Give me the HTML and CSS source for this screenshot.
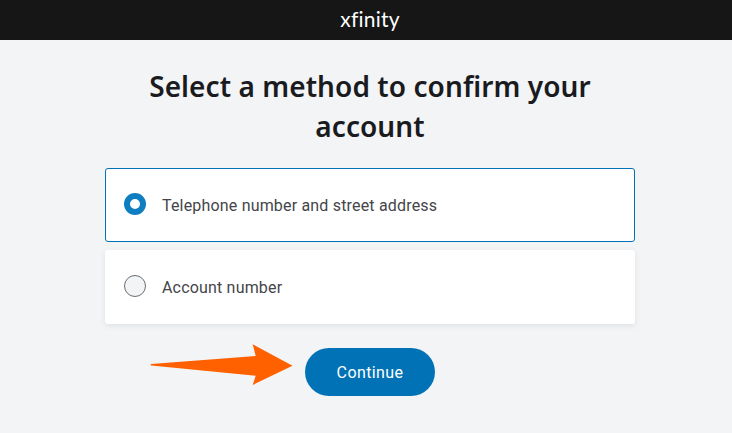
FILE: index.html
```html
<!DOCTYPE html>
<html lang="en">
<head>
<meta charset="utf-8">
<title>Select a method</title>
<link rel="stylesheet" href="styles.css">
</head>
<body>
<header class="topbar"><span class="logo">xfinity</span></header>
<main class="content">
  <h1 class="title">Select a method to confirm your account</h1>
  <div class="options">
    <label class="option option-selected"><span class="radio radio-on"></span><span class="option-text">Telephone number and street address</span></label>
    <label class="option"><span class="radio"></span><span class="option-text">Account number</span></label>
  </div>
  <div class="actions">
    <svg class="arrow" width="144" height="42" viewBox="0 0 144 42"><path d="M1.2 20 L105.7 12 L102.7 0.3 L142.5 21.7 L102.7 41 L105.7 31.7 L1.2 21.6 Q0 20.8 1.2 20 Z" fill="#ff6000"/></svg>
    <button class="continue" type="button">Continue</button>
  </div>
</main>
</body>
</html>
```
FILE: styles.css
```css
* { box-sizing: border-box; }
html, body { margin: 0; height: 100%; }
body {
  background: #f2f4f6;
  font-family: "Noto Sans", "Open Sans", sans-serif;
  color: #1a1b1e;
  overflow: hidden;
}
.topbar {
  height: 40px;
  background: #161616;
  display: flex;
  align-items: center;
  justify-content: center;
  padding-left: 8px;
}
.logo {
  color: #fff;
  font-family: "Lato", sans-serif;
  font-size: 21px;
  line-height: 1;
  letter-spacing: 0.2px;
  margin-top: -3px;
}
.content {
  display: flex;
  flex-direction: column;
  align-items: center;
  padding-left: 8px;
}
.title {
  width: 530px;
  margin: 26px 0 0;
  text-align: center;
  font-size: 28px;
  line-height: 40px;
  font-weight: 600;
  letter-spacing: 0.07px;
}
.options {
  width: 530px;
  margin-top: 22px;
  display: flex;
  flex-direction: column;
  gap: 8px;
}
.option {
  height: 74px;
  background: #fff;
  border-radius: 3px;
  display: flex;
  align-items: center;
  padding-left: 19px;
  gap: 16px;
  box-shadow: 0 2px 6px rgba(0, 0, 0, 0.08);
}
.option-selected {
  border: 1px solid #0272b6;
  padding-left: 18px;
  box-shadow: none;
}
.radio {
  width: 22px;
  height: 22px;
  margin-bottom: 2px;
  border-radius: 50%;
  background: #f2f4f6;
  border: 1px solid #6b6e75;
}
.radio-on {
  background: #fff;
  border: 6px solid #0f7ec0;
}
.option-text {
  font-family: "Roboto", sans-serif;
  font-size: 16px;
  color: #44454a;
  letter-spacing: 0.18px;
}
.actions {
  width: 530px;
  margin-top: 24px;
  position: relative;
  display: flex;
  justify-content: center;
}
.arrow {
  position: absolute;
  left: 45px;
  top: -4px;
}
.continue {
  width: 130px;
  height: 48px;
  border: none;
  border-radius: 24px;
  background: #0272b6;
  color: #fff;
  font-family: "Roboto", sans-serif;
  font-size: 16px;
  font-weight: 400;
  letter-spacing: 0.4px;
}
```
